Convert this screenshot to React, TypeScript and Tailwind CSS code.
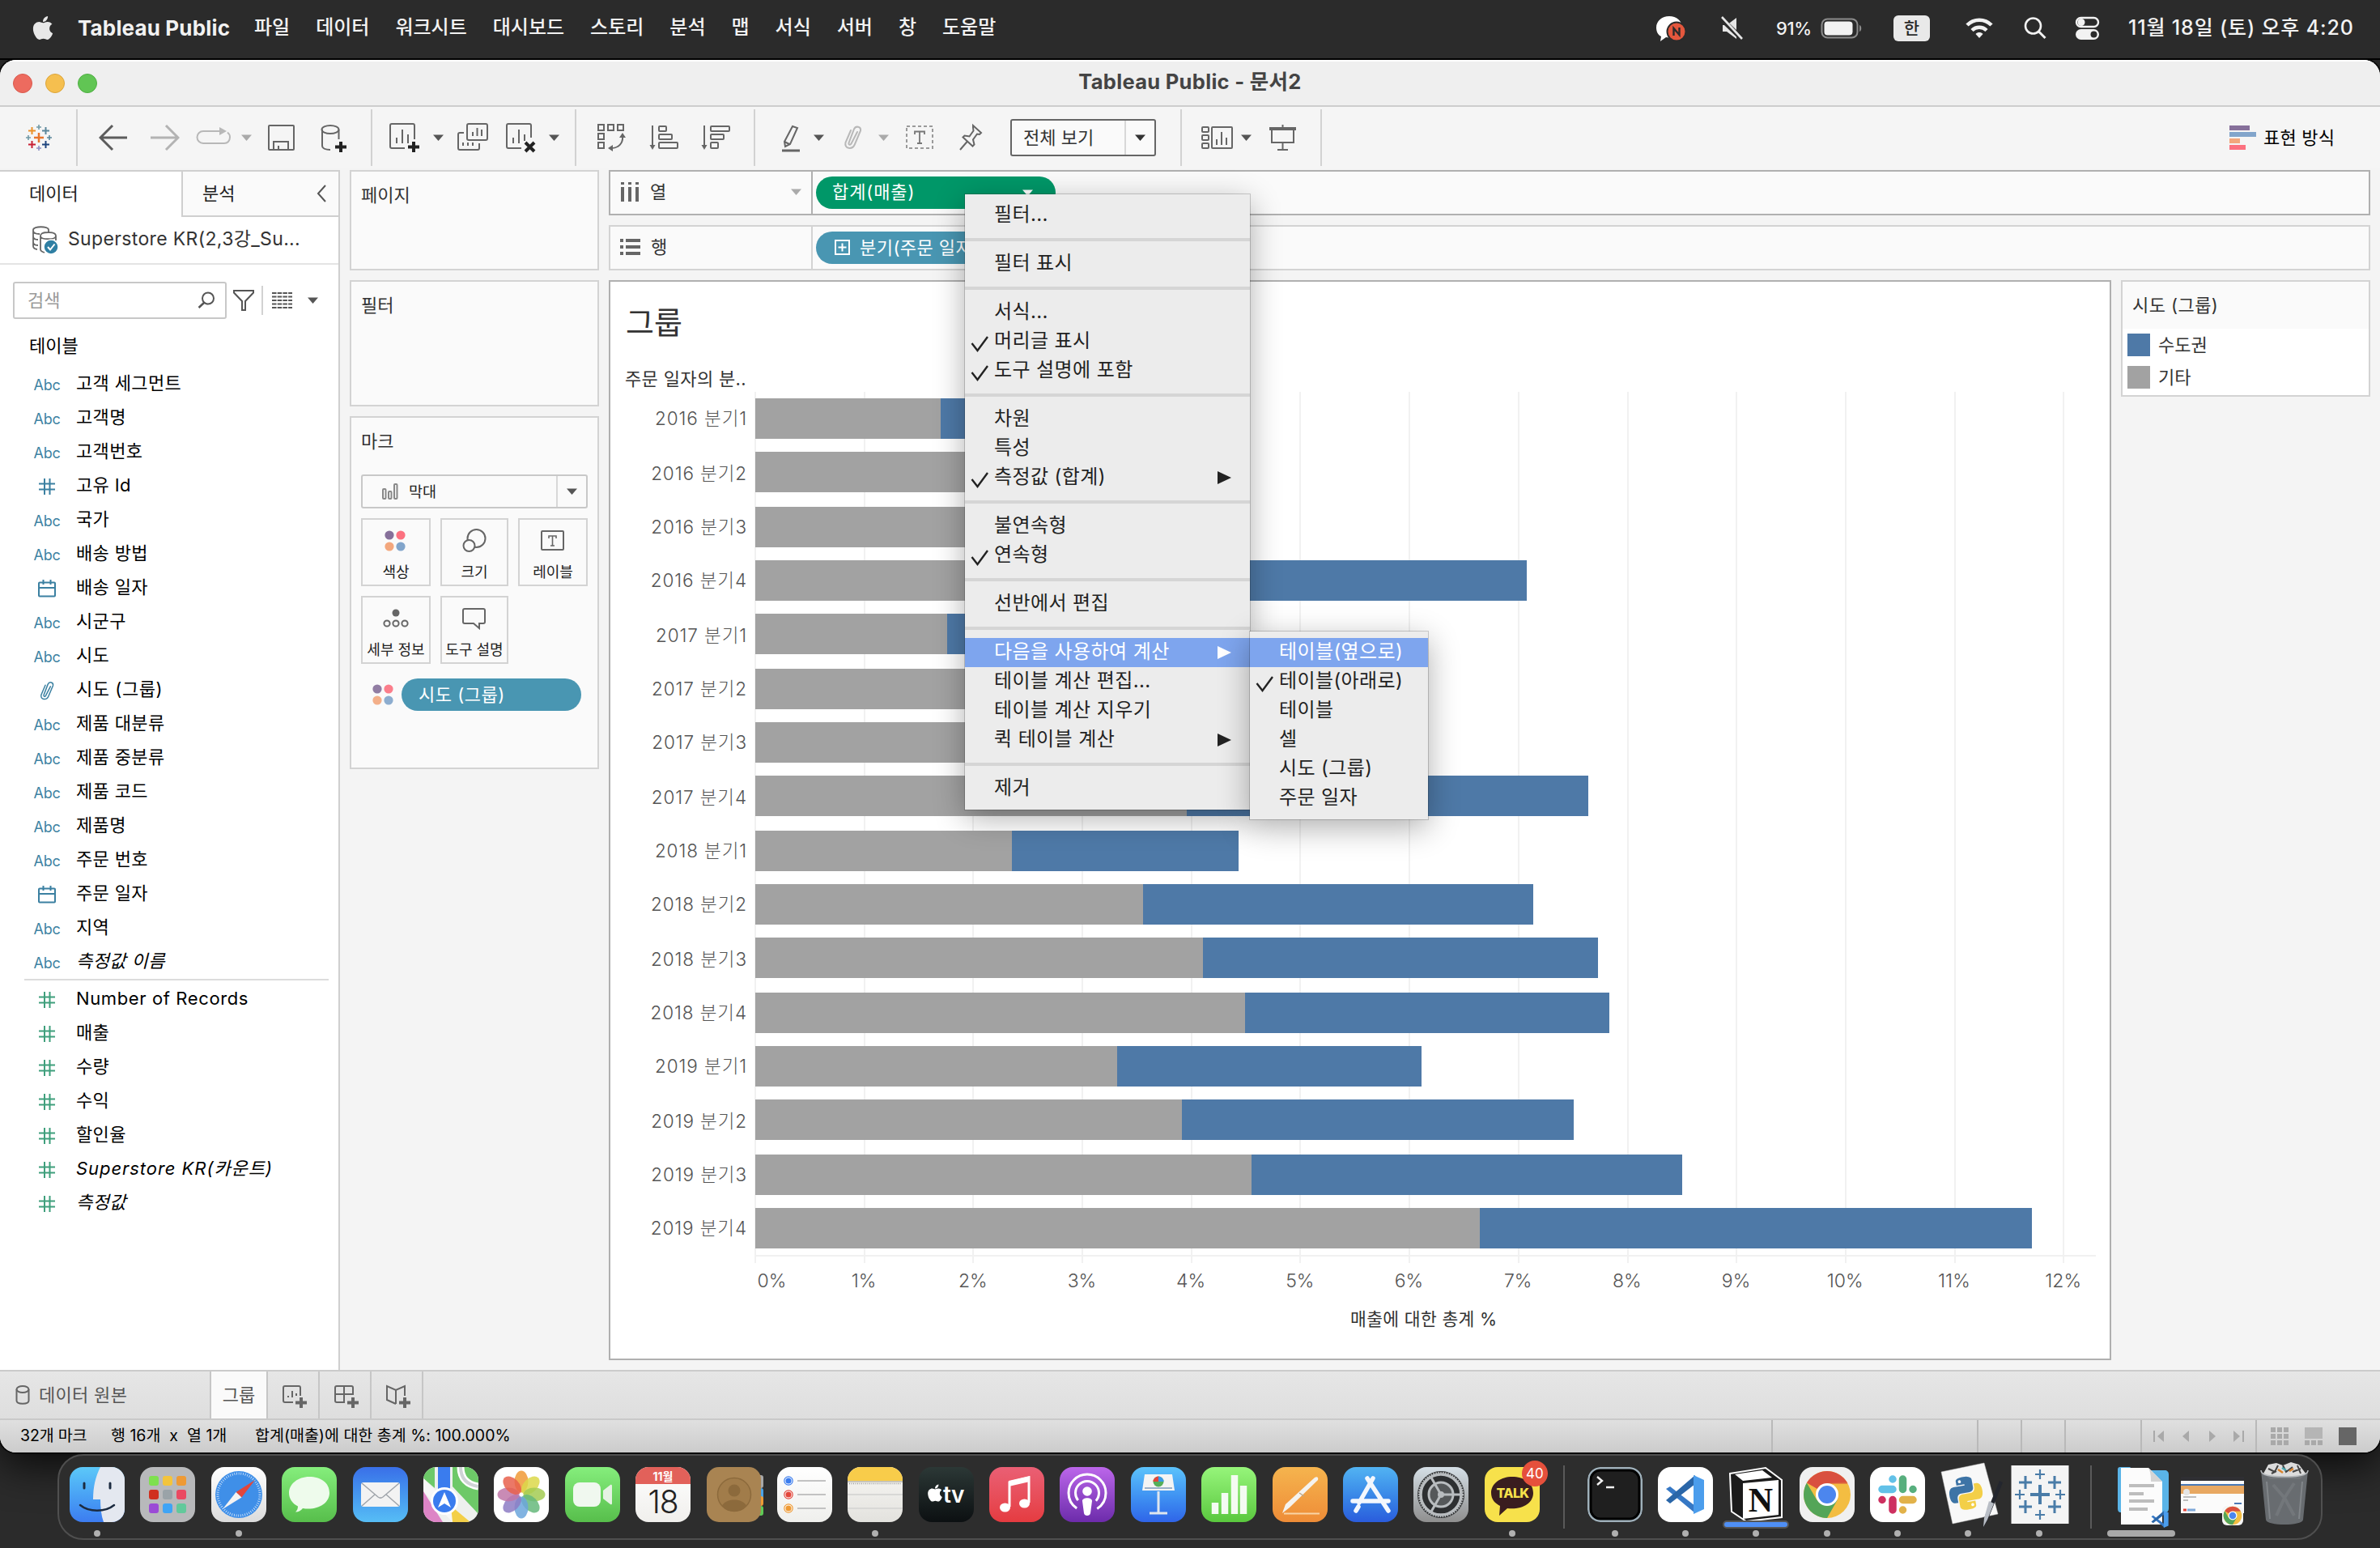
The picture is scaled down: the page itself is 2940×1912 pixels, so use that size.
import React from "react";
import { FaApple } from "react-icons/fa";

type IconProps = { w: number; h?: number; className?: string; children: React.ReactNode; color?: string; sw?: number };

function Ico({ w, h = 40, className = "", children, color = "#666", sw = 2 }: IconProps) {
  return (
    <svg width={w} height={h} viewBox={`0 0 ${w} ${h}`} className={`block shrink-0 ${className}`} fill="none" stroke={color} strokeWidth={sw}>
      {children}
    </svg>
  );
}

function Tri({ className = "", color = "#555" }: { className?: string; color?: string }) {
  return (
    <svg width="13" height="8" viewBox="0 0 13 8" className={`block shrink-0 ${className}`}>
      <path d="M0 0.5h13L6.5 8z" fill={color} />
    </svg>
  );
}

const VSep = ({ className = "" }: { className?: string }) => <div className={`h-[70px] w-[2px] shrink-0 bg-[#d2d2d2] ${className}`} />;

/* ------------------------------ macOS menu bar ------------------------------ */

const menus = ["파일", "데이터", "워크시트", "대시보드", "스토리", "분석", "맵", "서식", "서버", "창", "도움말"];

function MenuBar() {
  return (
    <div className="relative z-10 flex h-[74px] items-center border-b-2 border-black bg-[#2b2b2b] text-[24px] leading-[40px] font-medium text-[#f2f2f2]">
      <FaApple className="mt-[-4px] ml-[38px] h-[33px] w-[30px] text-[#e8e8e8]" />
      <div className="mt-[-3px] ml-[28px] w-[218px] text-[26px] font-bold tracking-[0.150px] whitespace-nowrap">Tableau Public</div>
      <div className="mt-[-5px] flex gap-[32px]">
        {menus.map((m) => (
          <span key={m} className="whitespace-nowrap">{m}</span>
        ))}
      </div>
      <div className="mt-[-2px] ml-auto flex items-center">
        <Ico w={38} h={34} color="none" className="mr-[41px]">
          <path d="M17 2C8 2 1 8 1 16c0 5 2 9 6 11l-1 6 7-5c10 2 20-4 20-12S26 2 17 2z" fill="#fff" />
          <circle cx="26" cy="21" r="11.5" fill="#e4573d" stroke="#2b2b2b" />
          <path d="M22.5 26v-9l7 8v-9" stroke="#2b2b2b" strokeWidth="2.4" fill="none" />
        </Ico>
        <Ico w={30} h={32} color="#e6e6e6" className="mr-[40px]">
          <path d="M4 12h5l12-9v26L9 20H4z" fill="#e6e6e6" stroke="none" />
          <path d="M1 3l27 26" stroke="#2b2b2b" strokeWidth="6" />
          <path d="M3 2l25 27" strokeWidth="2.6" />
        </Ico>
        <span className="mr-[9px] w-[46px] text-[22px] tracking-[-0.400px]">91%</span>
        <Ico w={52} h={26} color="#8c8c8c" className="mr-[38px]">
          <rect x="1.5" y="1.5" width="44" height="23" rx="7" strokeWidth="2" />
          <rect x="4.500" y="4.500" width="35" height="17" rx="4" fill="#f2f2f2" stroke="none" />
          <path d="M48 9c3 1 3 7 0 8z" fill="#8c8c8c" stroke="none" />
        </Ico>
        <div className="mr-[43px] flex h-[32px] w-[45px] items-center justify-center rounded-[6px] bg-[#e9e9e9] text-[21px] font-medium text-[#2b2b2b]">한</div>
        <Ico w={36} h={28} color="#f2f2f2" className="mr-[36px]">
          <path d="M3 10C11 1.500 25 1.500 33 10" strokeWidth="4.500" />
          <path d="M9 16.500C14 11.500 22 11.500 27 16.500" strokeWidth="4.500" />
          <path d="M13.500 21c2.600-2.600 6.400-2.600 9 0L18 26z" fill="#f2f2f2" stroke="none" />
        </Ico>
        <Ico w={30} h={30} color="#f2f2f2" className="mr-[34px]">
          <circle cx="12.500" cy="12" r="9.500" strokeWidth="2.600" />
          <path d="M19.500 19l8 8" strokeWidth="3" />
        </Ico>
        <Ico w={32} h={30} color="#f2f2f2" className="mr-[34px]">
          <rect x="2" y="2" width="27" height="11" rx="5.500" strokeWidth="2.400" />
          <circle cx="8" cy="7.500" r="3.500" fill="#f2f2f2" />
          <rect x="1" y="16" width="29" height="13" rx="6.500" fill="#f2f2f2" stroke="none" />
          <circle cx="23.500" cy="22.500" r="4" fill="#2b2b2b" stroke="none" />
        </Ico>
        <span className="mt-[-2px] mr-[33px] w-[278px] text-[25px] tracking-[0.850px] whitespace-nowrap">11월 18일 (토) 오후 4:20</span>
      </div>
    </div>
  );
}

/* --------------------------------- Toolbar --------------------------------- */

function Cross({ x, y, r, c, s = 2 }: { x: number; y: number; r: number; c: string; s?: number }) {
  return <path d={`M${x - r} ${y}h${2 * r}M${x} ${y - r}v${2 * r}`} stroke={c} strokeWidth={s} />;
}

function Clip({ color }: { color: string }) {
  return (
    <>
      <path d="M19 13l-7.500 14.500c-1 2-3.500 1.500-3-1L15 9.500c2-4.500 9-3.500 8 2L16 28c-3 7.500-13.500 6-11.500-2L11 11" stroke={color} strokeLinecap="round" />
    </>
  );
}

function Toolbar() {
  return (
    <div className="flex h-[76px] items-center bg-[#f5f5f5]">
      <Ico w={36} className="ml-[30px]" color="none">
        <Cross x={18} y={20} r={6} c="#e8762d" s={2.5} />
        <Cross x={9.500} y={11.500} r={4.500} c="#eb9129" />
        <Cross x={26.500} y={11.500} r={4.500} c="#5b879b" />
        <Cross x={9.500} y={28.500} r={4.500} c="#c72035" />
        <Cross x={26.500} y={28.500} r={4.500} c="#1f457e" />
        <Cross x={18} y={7} r={3} c="#7099a6" s={1.6} />
        <Cross x={18} y={33} r={3} c="#8d8fc2" s={1.6} />
        <Cross x={5} y={20} r={3} c="#7099a6" s={1.6} />
        <Cross x={31} y={20} r={3} c="#59879b" s={1.6} />
      </Ico>
      <VSep className="ml-[28px]" />
      <Ico w={36} className="ml-[26px]" sw={3} color="#5c5c5c">
        <path d="M2 20h33M17 5L2 20l15 15" />
      </Ico>
      <Ico w={36} className="ml-[28px]" sw={3} color="#b3b3b3">
        <path d="M0 20h33M19 5l15 15-15 15" />
      </Ico>
      <Ico w={44} className="ml-[20px]" color="#b8b8b8">
        <path d="M31 12H9a7.500 7.500 0 000 15h26c4 0 7-3 7-7.500 0-3-1-4.500-3-6" />
        <path d="M29 7v10l9-5z" fill="#b8b8b8" stroke="none" />
      </Ico>
      <Tri className="ml-[12px]" color="#aaa" />
      <Ico w={34} className="ml-[20px]">
        <rect x="1" y="5" width="31" height="30" rx="1" />
        <path d="M7 35v-10h18v10M13 35v-5" />
      </Ico>
      <Ico w={34} className="ml-[31px]">
        <ellipse cx="12" cy="10" rx="10.500" ry="5" />
        <path d="M2 10v20c0 3 4 5 10 5M22.500 10v12" />
        <path d="M25 25v13M18 31.500h14" stroke="#222" strokeWidth="4" />
      </Ico>
      <VSep className="ml-[28px]" />
      <Ico w={40} className="ml-[20px]">
        <path d="M20 33H4a2 2 0 01-2-2V5a2 2 0 012-2h26a2 2 0 012 2v17" />
        <path d="M10 27v-7M17 27V10M24 27V16" />
        <path d="M31 25v13M24 31.500h14" stroke="#222" strokeWidth="4" />
      </Ico>
      <Tri className="ml-[15px]" />
      <Ico w={40} className="ml-[16px]">
        <rect x="13" y="3" width="25" height="20" rx="2" />
        <path d="M20 18v-5M25.500 18V8M31 18v-8" />
        <path d="M9 14H4a2 2 0 00-2 2v17a2 2 0 002 2h22a2 2 0 002-2v-6M8 30v-4M14 30v-4M20 30v-4" />
      </Ico>
      <Ico w={40} className="ml-[20px]">
        <path d="M20 33H4a2 2 0 01-2-2V5a2 2 0 012-2h26a2 2 0 012 2v15" />
        <path d="M10 27v-7M17 27V10M24 24v-8" />
        <path d="M25 26l11 11M36 26L25 37" stroke="#222" strokeWidth="4" />
      </Ico>
      <Tri className="ml-[14px]" />
      <VSep className="ml-[19px]" />
      <Ico w={38} className="ml-[25px]">
        <rect x="2" y="4" width="7" height="7" />
        <rect x="14" y="4" width="7" height="7" />
        <rect x="26" y="4" width="7" height="7" />
        <rect x="2" y="15" width="7" height="7" />
        <rect x="2" y="26" width="7" height="7" />
        <path d="M18 33c9 0 15-6 14-15" />
        <path d="M32 14l-4 6h8zM14 33l6-4v8z" fill="#666" stroke="none" />
      </Ico>
      <Ico w={38} className="ml-[26px]">
        <path d="M5 5v27" />
        <path d="M5 35l-3.500-6h7z" fill="#666" stroke="none" />
        <rect x="13" y="6" width="9" height="6" rx="1" />
        <rect x="13" y="16" width="16" height="6" rx="1" />
        <rect x="13" y="26" width="23" height="7" rx="1" />
      </Ico>
      <Ico w={38} className="ml-[26px]">
        <path d="M5 5v27" />
        <path d="M5 35l-3.500-6h7z" fill="#666" stroke="none" />
        <rect x="13" y="6" width="23" height="6" rx="1" />
        <rect x="13" y="16" width="16" height="6" rx="1" />
        <rect x="13" y="26" width="9" height="7" rx="1" />
      </Ico>
      <VSep className="ml-[28px]" />
      <Ico w={26} className="ml-[32px]">
        <path d="M14 6l6 2-9 20-6 3-1-6z M4 25l6 3" />
        <path d="M1 36h22" strokeWidth="3" />
      </Ico>
      <Tri className="ml-[14px]" />
      <Ico w={28} className="ml-[22px]">
        <Clip color="#b8b8b8" />
      </Ico>
      <Tri className="ml-[17px]" color="#aaa" />
      <Ico w={36} className="ml-[20px]" color="#9a9a9a">
        <rect x="2" y="6" width="32" height="27" strokeDasharray="4 3" />
        <path d="M12 16v-3.500h12V16M18 12.500V27M15 27h6" strokeWidth="1.800" stroke="#777" />
      </Ico>
      <Ico w={32} className="ml-[30px]">
        <path d="M18 5l10 9-2 2-3-.5-5 7 1.500 6-2 2-12-11 2-2 6 1 5-7-.5-4zM11.500 24L2 35" />
      </Ico>
      <div className="ml-[32px] flex h-[46px] w-[180px] items-center rounded-[3px] border-2 border-[#666] bg-[#fafafa]">
        <span className="ml-[14px] w-[125px] text-[22px] font-normal text-[#333]">전체 보기</span>
        <div className="h-full w-[2px] bg-[#d8d8d8]" />
        <Tri className="ml-[11px]" color="#333" />
      </div>
      <VSep className="ml-[30px]" />
      <Ico w={40} className="ml-[24px]">
        <rect x="1" y="7" width="8" height="6" rx="1" />
        <rect x="1" y="17" width="8" height="6" rx="1" />
        <rect x="1" y="27" width="8" height="6" rx="1" />
        <rect x="13" y="7" width="25" height="26" rx="1" />
        <path d="M19 29v-7M25 29V13M31 29v-9" />
      </Ico>
      <Tri className="ml-[9px]" />
      <Ico w={36} className="ml-[21px]">
        <path d="M1 9h33" strokeWidth="4" />
        <path d="M4 10v16h27V10M17.500 4v4M17.500 26v8M11 35h13" />
      </Ico>
      <VSep className="ml-[28px]" />
      <Ico w={36} className="ml-auto" color="none">
        <path d="M2 5h25v6H2z" fill="#86709a" />
        <path d="M2 13h33v6H2z" fill="#82a5cb" />
        <path d="M2 21h13v6H2z" fill="#f3a77d" />
        <path d="M2 29h20v6H2z" fill="#fc7180" />
      </Ico>
      <span className="mr-[54px] ml-[8px] w-[90px] text-[22px] tracking-[0.2px] whitespace-nowrap text-black">표현 방식</span>
    </div>
  );
}

/* -------------------------------- Data pane -------------------------------- */

type Kind = "abc" | "num" | "date" | "clip";
type FieldDef = { kind: Kind; name: string; className?: string };
const dims: FieldDef[] = [
  { kind: "abc", name: "고객 세그먼트" },
  { kind: "abc", name: "고객명" },
  { kind: "abc", name: "고객번호" },
  { kind: "num", name: "고유 Id" },
  { kind: "abc", name: "국가" },
  { kind: "abc", name: "배송 방법" },
  { kind: "date", name: "배송 일자" },
  { kind: "abc", name: "시군구" },
  { kind: "abc", name: "시도" },
  { kind: "clip", name: "시도 (그룹)", className: "tracking-[0.550px]" },
  { kind: "abc", name: "제품 대분류" },
  { kind: "abc", name: "제품 중분류" },
  { kind: "abc", name: "제품 코드" },
  { kind: "abc", name: "제품명" },
  { kind: "abc", name: "주문 번호" },
  { kind: "date", name: "주문 일자" },
  { kind: "abc", name: "지역" },
  { kind: "abc", name: "측정값 이름", className: "italic tracking-[0.400px]" },
];
const measures: FieldDef[] = [
  { kind: "num", name: "Number of Records", className: "tracking-[0.620px]" },
  { kind: "num", name: "매출" },
  { kind: "num", name: "수량" },
  { kind: "num", name: "수익" },
  { kind: "num", name: "할인율" },
  { kind: "num", name: "Superstore KR(카운트)", className: "italic tracking-[0.950px]" },
  { kind: "num", name: "측정값", className: "italic tracking-[0.400px]" },
];

function Field({ kind, name, className = "tracking-[0.350px]", color }: FieldDef & { color: string }) {
  return (
    <div className="flex h-[42px] items-center">
      <div className="ml-[40px] flex w-[36px] translate-y-[2px] justify-center">
        {kind === "abc" && <span className="text-[18px] tracking-[-0.300px] text-[#4083a3]">Abc</span>}
        {kind === "num" && (
          <Ico w={22} h={22} color={color}>
            <path d="M8 1v20M14.500 1v20M1 7.500h20M1 14.500h20" />
          </Ico>
        )}
        {kind === "date" && (
          <Ico w={22} h={22} color={color}>
            <rect x="1" y="3.500" width="20" height="17" rx="1" />
            <path d="M1 10h20M6.500 0v6M15.500 0v6" />
          </Ico>
        )}
        {kind === "clip" && (
          <svg width="22" height="26" viewBox="1 3 25 33" fill="none" strokeWidth="1.900">
            <Clip color={color} />
          </svg>
        )}
      </div>
      <span className={`ml-[18px] text-[22px] whitespace-nowrap text-black ${className}`}>{name}</span>
    </div>
  );
}

function DataPane() {
  return (
    <div className="flex w-[420px] shrink-0 flex-col border-t-2 border-r-2 border-[#cfcfcf] bg-white">
      <div className="flex h-[56px] text-[22px] text-[#222]">
        <div className="flex w-[224px] items-center pb-[2px] pl-[36px]">데이터</div>
        <div className="flex grow items-center border-b-2 border-l-2 border-[#cfcfcf] bg-[#fafafa] pl-[24px]">
          분석
          <Ico w={14} h={22} className="mr-[14px] ml-auto" color="#555">
            <path d="M12 1L3 11l9 10" />
          </Ico>
        </div>
      </div>
      <div className="flex h-[59px] items-center border-b-2 border-[#e4e4e4]">
        <Ico w={34} h={36} className="ml-[39px]" color="#666">
          <path d="M21 8.500V5c0-5-19-5-19 0v20c0 2 2 3.500 5 4M2 6c0 3 4 4 8 4M21 8c-8 0-10 2-10 4.500V29c0 2 2 3 5 4M11 12.500c0 5 19 5 19 0S21 8 21 8M30 12v6M2 13c0 3 3 4 6 4M2 20c0 3 3 4 6 4" strokeWidth="1.800" />
          <circle cx="24" cy="26" r="9" fill="#2f7fa3" stroke="#fff" strokeWidth="1.500" />
          <path d="M20 26l3 3.500 5.500-7" stroke="#fff" />
        </Ico>
        <span className="mt-[-2px] ml-[11px] text-[23px] tracking-[0.350px] whitespace-nowrap text-[#333]">Superstore KR(2,3강_Su...</span>
      </div>
      <div className="mt-[21px] flex h-[46px] items-center">
        <div className="ml-[16px] flex h-[46px] w-[264px] items-center rounded-[3px] border-2 border-[#c8c8c8] bg-white">
          <span className="ml-[16px] text-[22px] text-[#9a9a9a]">검색</span>
          <Ico w={22} h={22} className="mr-[12px] ml-auto" color="#555">
            <circle cx="13" cy="8.500" r="7" />
            <path d="M8.500 13.500L1.500 20" strokeWidth="2.500" />
          </Ico>
        </div>
        <Ico w={28} h={28} className="ml-[7px]" color="#555">
          <path d="M2 2h24v2.500L16 15v11h-4V15L2 4.500z" />
        </Ico>
        <div className="ml-[8px] h-[36px] w-[2px] bg-[#d2d2d2]" />
        <Ico w={26} h={22} className="ml-[11px]" color="#555">
          <path d="M0 2h25M0 6.500h25M0 11h25M0 15.500h25M0 20h25" strokeDasharray="5.500 1.200" />
        </Ico>
        <Tri className="ml-[18px]" />
      </div>
      <div className="mt-[10px] mb-[2px] flex h-[46px] items-center pl-[36px] text-[22px] text-black">테이블</div>
      {dims.map((f) => (
        <Field key={f.name} {...f} color="#3b80a1" />
      ))}
      <div className="mt-[1px] mr-[12px] mb-[1px] ml-[30px] h-[2px] shrink-0 bg-[#dcdcdc]" />
      {measures.map((f) => (
        <Field key={f.name} {...f} color="#3f9f7c" />
      ))}
    </div>
  );
}

/* ---------------------------------- Cards ---------------------------------- */

function ColorDots({ className = "" }: { className?: string }) {
  return (
    <Ico w={28} h={28} color="none" className={className}>
      <circle cx="7" cy="7" r="5.600" fill="#86709a" />
      <circle cx="21" cy="7" r="5.600" fill="#fc7180" />
      <circle cx="7" cy="21" r="5.600" fill="#f3a77d" />
      <circle cx="21" cy="21" r="5.600" fill="#82a5cb" />
    </Ico>
  );
}

function MarkButton({ label, className, children }: { label: string; className: string; children: React.ReactNode }) {
  return (
    <div className={`flex h-[84px] flex-col items-center border-2 border-[#d3d3d3] bg-[#fafafa] ${className}`}>
      <div className="flex h-[52px] items-center justify-center">{children}</div>
      <div className="text-[18px] leading-[26px] whitespace-nowrap text-[#222]">{label}</div>
    </div>
  );
}

function CardColumn() {
  return (
    <div className="ml-[12px] flex w-[308px] shrink-0 flex-col gap-[12px] text-[22px] leading-[32px] text-[#333]">
      <div className="h-[124px] border-2 border-[#d3d3d3] bg-[#fafafa] pt-[13px] pl-[12px]">페이지</div>
      <div className="h-[156px] border-2 border-[#d3d3d3] bg-[#fafafa] pt-[13px] pl-[12px]">필터</div>
      <div className="h-[436px] border-2 border-[#d3d3d3] bg-[#fafafa] px-[12px] pt-[13px]">
        마크
        <div className="mt-[25px] flex h-[42px] items-center rounded-[3px] border-2 border-[#c8c8c8]">
          <Ico w={20} h={22} className="ml-[24px]" color="#888">
            <rect x="1" y="8" width="3.500" height="12" rx="1" />
            <rect x="8" y="11" width="3.500" height="9" rx="1" />
            <rect x="15" y="2" width="3.500" height="18" rx="1" />
          </Ico>
          <span className="ml-[13px] text-[18.500px] text-[#222]">막대</span>
          <div className="ml-auto h-full w-[2px] bg-[#d8d8d8]" />
          <Tri className="mx-[11px]" />
        </div>
        <div className="mt-[12px] flex gap-[12px]">
          <MarkButton label="색상" className="w-[86px]">
            <ColorDots className="ml-[-2px]" />
          </MarkButton>
          <MarkButton label="크기" className="w-[84px]">
            <Ico w={32} h={32}>
              <circle cx="18.500" cy="13" r="11" />
              <circle cx="9.500" cy="22" r="7" fill="#fafafa" />
            </Ico>
          </MarkButton>
          <MarkButton label="레이블" className="w-[86px]">
            <Ico w={30} h={26}>
              <rect x="1" y="1" width="27" height="23" rx="1" />
              <path d="M10 10V7h9v3M14.500 7v12M12 19h5" strokeWidth="1.600" />
            </Ico>
          </MarkButton>
        </div>
        <div className="mt-[12px] flex gap-[12px]">
          <MarkButton label="세부 정보" className="w-[86px]">
            <Ico w={32} h={24}>
              <circle cx="16" cy="5" r="4.500" fill="#666" stroke="none" />
              <circle cx="5" cy="18" r="3.600" />
              <circle cx="16" cy="18" r="3.600" />
              <circle cx="27" cy="18" r="3.600" />
            </Ico>
          </MarkButton>
          <MarkButton label="도구 설명" className="w-[84px]">
            <Ico w={30} h={28}>
              <path d="M3 2h23a2 2 0 012 2v14a2 2 0 01-2 2h-5v6l-7-6H3a2 2 0 01-2-2V4a2 2 0 012-2z" />
            </Ico>
          </MarkButton>
        </div>
        <div className="mt-[18px] flex items-center">
          <ColorDots className="ml-[13px] opacity-90" />
          <div className="ml-[9px] h-[40px] w-[222px] rounded-full bg-[#4996b2] pl-[21px] text-[22px] leading-[40px] tracking-[0.500px] text-white">시도 (그룹)</div>
        </div>
      </div>
    </div>
  );
}

/* ---------------------------------- Chart ---------------------------------- */

const ORIGIN = 933;
// [label, end of the grey segment, end of the blue segment] in canvas pixels
const rows: [string, number, number][] = [
  ["2016 분기1", 1162, 1330],
  ["2016 분기2", 1240, 1450],
  ["2016 분기3", 1300, 1500],
  ["2016 분기4", 1430, 1886],
  ["2017 분기1", 1170, 1380],
  ["2017 분기2", 1280, 1500],
  ["2017 분기3", 1300, 1520],
  ["2017 분기4", 1466, 1962],
  ["2018 분기1", 1250, 1530],
  ["2018 분기2", 1412, 1894],
  ["2018 분기3", 1486, 1974],
  ["2018 분기4", 1538, 1988],
  ["2019 분기1", 1380, 1756],
  ["2019 분기2", 1460, 1944],
  ["2019 분기3", 1546, 2078],
  ["2019 분기4", 1828, 2510],
];
const ticks = [0, 1, 2, 3, 4, 5, 6, 7, 8, 9, 10, 11, 12];

function Chart() {
  return (
    <div className="h-[1334px] w-[1856px] border-2 border-[#b0b0b0] bg-white">
      <div className="mt-[27px] ml-[19px] h-[46px] text-[38px] leading-[46px] text-[#333]">그룹</div>
      <div className="mt-[31px] ml-[18px] h-[32px] text-[22px] leading-[32px] tracking-[0.350px] text-[#333]">주문 일자의 분..</div>
      <div className="relative h-[1066px]">
        <div className="absolute inset-y-0 left-[178px] flex">
          {ticks.map((t) => (
            <div key={t} className="w-[134.700px] border-l-2 border-[#f1f1f1] last:w-[40px]" />
          ))}
        </div>
        <div className="relative flex flex-col">
          {rows.map(([label, grey, blue], i) => (
            <div key={label} className={`flex items-center ${i % 3 === 1 ? "h-[68px] pb-[2px]" : "h-[66px]"}`}>
              <div className={`w-[169px] text-right text-[22.500px] font-light tracking-[0.900px] whitespace-nowrap text-[#555] ${i % 3 === 1 ? "translate-y-[2px]" : ""}`}>{label}</div>
              <div className="ml-[10px] h-[50px] bg-[#a2a2a2]" style={{ width: grey - ORIGIN }} />
              <div className="h-[50px] bg-[#4e79a7]" style={{ width: blue - grey }} />
            </div>
          ))}
        </div>
      </div>
      <div className="ml-[178px] h-[2px] w-[1657px] bg-[#f1f1f1]" />
      <div className="ml-[178px] flex h-[8px]">
        {ticks.map((t) => (
          <div key={t} className="w-[134.700px] border-l-2 border-[#f1f1f1] last:w-[40px]" />
        ))}
      </div>
      <div className="mt-[6px] ml-[111px] flex h-[32px] text-[23px] leading-[32px] font-light text-[#555]">
        {ticks.map((t) => (
          <div key={t} className={`w-[134.700px] shrink-0 text-center ${t === 0 ? "pl-[42px]" : ""}`}>
            {t}%
          </div>
        ))}
      </div>
      <div className="mt-[15px] ml-[914px] text-[21.500px] leading-[32px] tracking-[0.350px] whitespace-nowrap text-[#333]">매출에 대한 총계 %</div>
    </div>
  );
}

function Workspace() {
  return (
    <div className="ml-[12px] flex flex-col gap-[12px] text-[22px]">
      <div className="flex h-[56px] w-[2176px] items-center border-2 border-[#b0b0b0] bg-[#fafafa]">
        <Ico w={24} h={26} className="mt-[-3px] ml-[12px]" color="#666" sw={4}>
          <path d="M3 1v3M3 7v18M12 1v3M12 7v18M21 1v3M21 7v18" />
        </Ico>
        <span className="mt-[-2px] ml-[13px] w-[174px] text-[#333]">열</span>
        <Tri className="mt-[-2px]" color="#aaa" />
        <div className="ml-[12px] h-full w-[2px] bg-[#b0b0b0]" />
        <div className="ml-[4px] flex h-[40px] w-[296px] items-center rounded-full bg-[#009768] pb-[1px] pl-[20px] tracking-[0.900px] text-white">
          합계(매출)
          <Tri className="mr-[28px] ml-auto" color="#fff" />
        </div>
      </div>
      <div className="flex h-[56px] w-[2176px] items-center border-2 border-[#d3d3d3] bg-[#fafafa]">
        <Ico w={26} h={22} className="mt-[-2px] ml-[12px]" color="#666" sw={4}>
          <path d="M0 3h4M7 3h18M0 11h4M7 11h18M0 19h4M7 19h18" />
        </Ico>
        <span className="mt-[-1px] ml-[12px] w-[198px] text-[#333]">행</span>
        <div className="h-full w-[2px] bg-[#d3d3d3]" />
        <div className="ml-[4px] flex h-[40px] w-[296px] items-center rounded-full bg-[#4996b2] pl-[23px] tracking-[0.450px] text-white">
          <Ico w={20} h={20} color="#fff" className="mr-[11px]">
            <rect x="1" y="1" width="17" height="17" />
            <path d="M9.500 4.500v10M4.500 9.500h10" />
          </Ico>
          분기(주문 일자)
        </div>
      </div>
      <div className="flex gap-[12px]">
        <Chart />
        <div className="h-[144px] w-[308px] border-2 border-[#d3d3d3] bg-white text-[#333]">
          <div className="h-[58px] bg-[#fafafa] pl-[12px] text-[22px] leading-[58px] tracking-[0.450px]">시도 (그룹)</div>
          <div className="flex h-[40px] items-center pl-[6px]">
            <div className="h-[28px] w-[28px] bg-[#4e79a7]" />
            <span className="ml-[10px]">수도권</span>
          </div>
          <div className="flex h-[40px] items-center pl-[6px]">
            <div className="h-[28px] w-[28px] bg-[#a2a2a2]" />
            <span className="ml-[10px]">기타</span>
          </div>
        </div>
      </div>
    </div>
  );
}

/* ------------------------------- Context menus ------------------------------ */

type Item = { t: string; check?: boolean; arrow?: boolean; on?: boolean } | "-";
const mainMenu: Item[] = [
  { t: "필터..." },
  "-",
  { t: "필터 표시" },
  "-",
  { t: "서식..." },
  { t: "머리글 표시", check: true },
  { t: "도구 설명에 포함", check: true },
  "-",
  { t: "차원" },
  { t: "특성" },
  { t: "측정값 (합계)", check: true, arrow: true },
  "-",
  { t: "불연속형" },
  { t: "연속형", check: true },
  "-",
  { t: "선반에서 편집" },
  "-",
  { t: "다음을 사용하여 계산", arrow: true, on: true },
  { t: "테이블 계산 편집..." },
  { t: "테이블 계산 지우기" },
  { t: "퀵 테이블 계산", arrow: true },
  "-",
  { t: "제거" },
];
const subMenu: Item[] = [
  { t: "테이블(옆으로)", on: true },
  { t: "테이블(아래로)", check: true },
  { t: "테이블" },
  { t: "셀" },
  { t: "시도 (그룹)" },
  { t: "주문 일자" },
];

function ContextMenu({ items, className }: { items: Item[]; className: string }) {
  return (
    <div className={`absolute z-20 bg-[#ececec] py-[8px] shadow-[0_0_0_1px_rgba(0,0,0,0.18),0_10px_36px_rgba(0,0,0,0.32)] ${className}`}>
      {items.map((it, i) =>
        it === "-" ? (
          <div key={i} className="flex h-[24px] items-center">
            <div className="h-[4px] w-full bg-[#d5d5d5]" />
          </div>
        ) : (
          <div key={i} className={`flex h-[36px] items-center ${it.on ? "bg-[#7ea5ee] text-white" : "text-[#222]"}`}>
            <div className="w-[36px] pl-[7px]">
              {it.check && (
                <Ico w={23} h={24} color="#222" className="translate-y-[2px]">
                  <path d="M1.500 12l7 9L21 4" strokeWidth="2.400" />
                </Ico>
              )}
            </div>
            <span className="mt-[-2px] text-[24px] tracking-[0.400px] whitespace-nowrap">{it.t}</span>
            {it.arrow && (
              <svg width="17" height="18" viewBox="0 0 17 18" className="mr-[23px] ml-auto">
                <path d="M0 1l17 8-17 8z" fill="currentColor" />
              </svg>
            )}
          </div>
        ),
      )}
    </div>
  );
}

/* ------------------------------ Window footers ------------------------------ */

function SheetTabs() {
  const cell = "flex h-full w-[64px] items-center justify-center border-r-2 border-[#c6c6c6]";
  return (
    <div className="flex h-[60px] items-center border-t-2 border-[#cbcbcb] bg-linear-to-b from-[#e6e6e6] to-[#dedede] text-[22px] text-[#555]">
      <Ico w={18} h={24} className="ml-[19px]" color="#666">
        <ellipse cx="9" cy="5" rx="7.500" ry="4" />
        <path d="M1.500 5v14c0 5 15 5 15 0V5" />
      </Ico>
      <span className="ml-[11px] w-[211px] tracking-[0.300px]">데이터 원본</span>
      <div className="flex h-full w-[72px] items-center justify-center border-x-2 border-[#c6c6c6] bg-[#fafafa]">그룹</div>
      <div className={cell}>
        <Ico w={32} h={32} className="mt-[5px] ml-[4px]">
          <path d="M14 22H4a2 2 0 01-2-2V4a2 2 0 012-2h17a2 2 0 012 2v10M8 16v-2M13 16V8M18 14v-3" />
          <path d="M24 16v13M17 22.500h14" strokeWidth="4" />
        </Ico>
      </div>
      <div className={cell}>
        <Ico w={32} h={32} className="mt-[5px] ml-[3px]">
          <path d="M14 22H4a2 2 0 01-2-2V4a2 2 0 012-2h18a2 2 0 012 2v9M2 12h22M13 2v20" />
          <path d="M24 16v13M17 22.500h14" strokeWidth="4" />
        </Ico>
      </div>
      <div className={cell}>
        <Ico w={32} h={32} className="mt-[5px] ml-[3px]">
          <path d="M13 24L2 19V2l11 5 11-5v12M13 7v17" />
          <path d="M24 16v13M17 22.500h14" strokeWidth="4" />
        </Ico>
      </div>
    </div>
  );
}

function StatusBar() {
  const sep = "h-full w-[2px] bg-[#b9b9b9]";
  return (
    <div className="flex h-[42px] items-center border-t-2 border-[#c9c9c9] bg-linear-to-b from-[#e0e0e0] to-[#cccccc] text-[19.500px] text-black">
      <span className="ml-[25px] w-[112px] tracking-[-0.150px]">32개 마크</span>
      <span className="w-[178px] whitespace-pre">행 16개&nbsp; x&nbsp; 열 1개</span>
      <span className="whitespace-nowrap">합계(매출)에 대한 총계 %: 100.000%</span>
      <div className="ml-auto flex h-full items-center">
        <div className={`${sep} mr-[252px]`} />
        <div className={`${sep} mr-[52px]`} />
        <div className={`${sep} mr-[52px]`} />
        <div className={`${sep} mr-[92px]`} />
        <div className={`${sep} mr-[14px]`} />
        <div className="flex w-[112px] justify-between">
          <Ico w={14} h={16} color="#a9a9a9">
            <path d="M1 1v14" />
            <path d="M13 1v14L5 8z" fill="#a9a9a9" stroke="none" />
          </Ico>
          <Ico w={14} h={16} color="none">
            <path d="M11 1v14L3 8z" fill="#a9a9a9" />
          </Ico>
          <Ico w={14} h={16} color="none">
            <path d="M4 1v14l8-7z" fill="#a9a9a9" />
          </Ico>
          <Ico w={14} h={16} color="#a9a9a9">
            <path d="M13 1v14" />
            <path d="M1 1v14l8-7z" fill="#a9a9a9" stroke="none" />
          </Ico>
        </div>
        <div className={`${sep} mr-[16px] ml-[14px]`} />
        <Ico w={24} h={24} color="#a9a9a9" sw={6}>
          <path d="M1 4h22M1 12h22M1 20h22" strokeDasharray="6 2" />
        </Ico>
        <Ico w={24} h={24} color="#a9a9a9" sw={6} className="ml-[18px]">
          <path d="M1 1h22v14H1z" fill="#b5b5b5" stroke="none" />
          <path d="M1 20h22" strokeDasharray="6 2" />
        </Ico>
        <div className="mr-[29px] ml-[19px] h-[22px] w-[22px] bg-[#666]" />
      </div>
    </div>
  );
}

/* ----------------------------------- Dock ----------------------------------- */

function Tile({ bg = "", dot, children, bare }: { bg?: string; dot?: boolean; children?: React.ReactNode; bare?: boolean }) {
  return (
    <div className="relative flex h-[68px] w-[68px] shrink-0 justify-center">
      <div className={`h-[68px] w-[68px] ${bare ? "" : "overflow-hidden rounded-[16px]"} ${bg}`}>
        <svg width="68" height="68" viewBox="0 0 68 68" className="block overflow-visible">
          {children}
        </svg>
      </div>
      {dot && <div className="absolute top-[78px] h-[8px] w-[8px] rounded-full bg-[#b0b0b0]" />}
    </div>
  );
}

function Chrome() {
  return (
    <>
      <circle cx="34" cy="34" r="29" fill="#f3bd42" />
      <path d="M34 34L8.900 19.500A29 29 0 0159.100 19.500L34 20z" fill="#d9503f" />
      <path d="M8.900 19.500A29 29 0 0034 63L46.500 41 34 34 21.500 41z" fill="#54a558" />
      <path d="M34 20h25.100" stroke="#d9503f" strokeWidth="1" />
      <circle cx="34" cy="34" r="14" fill="#fff" />
      <circle cx="34" cy="34" r="11" fill="#4c86ee" />
    </>
  );
}

function VsCode() {
  return (
    <>
      <path d="M10 27l5-3 31 24v9z" fill="#3678c5" />
      <path d="M10 41l5 4 31-24V10z" fill="#2a66a8" />
      <path d="M44 10l13 6v36l-13 6z" fill="#4b9dec" />
    </>
  );
}

const petals: [number, string][] = [
  [0, "#f09a37"],
  [45, "#dcd84a"],
  [90, "#a3cb52"],
  [135, "#66b97b"],
  [180, "#6ba6dc"],
  [225, "#8d7cc4"],
  [270, "#c077a8"],
  [315, "#e8604c"],
];

const launch = ["#7ee04f", "#f3c43c", "#ee9a35", "#d0301f", "#9aa3a8", "#ea4a62", "#9b4bd6", "#3fa4f5", "#62c99b"];

function Dock() {
  return (
    <div className="mx-[71px] mt-[2px] flex h-[106px] items-start rounded-[32px] border-2 border-[#4f4f4f] bg-[#2d2d2d] pt-[14px] pl-[13px]">
      <div className="flex gap-[19.400px]">
        <Tile bg="bg-linear-to-b from-[#5cc8f8] to-[#3d7cf0]" dot>
          <path d="M38 0c-6 12-9 24-9 40h9c0 10 1 20 4 28h26V0z" fill="#e4e8f0" />
          <path d="M18 20v6M50 20v6" stroke="#1c2b40" strokeWidth="3" strokeLinecap="round" />
          <path d="M13 47c11 9 31 9 42 0" stroke="#1c2b40" strokeWidth="2.500" fill="none" strokeLinecap="round" />
        </Tile>
        <Tile bg="bg-[#b8b9bb]">
          {launch.map((c, i) => (
            <rect key={c} x={11 + (i % 3) * 17} y={11 + Math.floor(i / 3) * 17} width="12" height="12" rx="3" fill={c} />
          ))}
        </Tile>
        <Tile bg="bg-linear-to-b from-white to-[#dcdcdc]" dot>
          <circle cx="34" cy="34" r="29" fill="#3f8fe8" />
          <circle cx="34" cy="34" r="26" fill="none" stroke="#d4e6fa" strokeWidth="3" strokeDasharray="0.800 1.900" />
          <path d="M54 16L37.500 37.500 30.500 31z" fill="#e2463b" />
          <path d="M14 52l16.500-21 7 6.500z" fill="#f3f3f3" />
        </Tile>
        <Tile bg="bg-linear-to-b from-[#85ee7c] to-[#57be4b]">
          <path d="M34 12c-14 0-25 9-25 20 0 7 4 13 11 16.500 0 3-1 5-3 7 4 0 7-2 9-4.500 18 3 33-6 33-19S48 12 34 12z" fill="#eefbec" />
        </Tile>
        <Tile bg="bg-linear-to-b from-[#3a6fe8] to-[#57bdf5]">
          <rect x="10" y="19" width="48" height="30" rx="3" fill="#f3f3f3" />
          <path d="M11 20l20 17c2 1.500 4 1.500 6 0l20-17M11 48l16-14M57 48L41 34" stroke="#9fa4aa" strokeWidth="1.500" fill="none" />
        </Tile>
        <Tile bg="bg-[#eef0ee]">
          <path d="M36 0h32v58L36 24z" fill="#6dc968" />
          <path d="M0 0h14v26L0 14z" fill="#6dc968" />
          <path d="M0 14l34 34 20 20h-18L0 30z" fill="#f7f7f7" />
          <path d="M0 30l24 38H0z" fill="#dd84c6" />
          <path d="M34 48l24 20H36z" fill="#f3cf48" />
          <path d="M18 0h15v40H18z" fill="#3a7cee" />
          <path d="M46 0c0 14 8 22 22 24" stroke="#fff" strokeWidth="9" fill="none" />
          <path d="M46 0c0 14 8 22 22 24" stroke="#cfd3d6" strokeWidth="4" fill="none" />
          <circle cx="26" cy="42" r="17" fill="#fff" />
          <circle cx="26" cy="42" r="14" fill="#3a7cee" />
          <path d="M26 31l8 19-8-5-8 5z" fill="#fff" />
        </Tile>
        <Tile bg="bg-white">
          {petals.map(([a, c]) => (
            <ellipse key={a} cx="34" cy="18" rx="8.500" ry="13.500" fill={c} opacity="0.850" transform={`rotate(${a} 34 34)`} />
          ))}
        </Tile>
        <Tile bg="bg-linear-to-b from-[#85ee7c] to-[#57be4b]">
          <rect x="10" y="19" width="34" height="30" rx="8" fill="#f0f8ef" />
          <path d="M47 29l9-7c1-.8 2 0 2 1v22c0 1-1 1.800-2 1l-9-7z" fill="#e5f2e3" />
        </Tile>
        <Tile bg="bg-linear-to-b from-white to-[#f0efec]">
          <path d="M0 0h68v21H0z" fill="#e2615a" />
          <text x="34" y="17" textAnchor="middle" fontSize="14" fontWeight="700" fill="#fff">11월</text>
          <text x="34" y="57" textAnchor="middle" fontSize="39" fontWeight="300" fill="#222" letterSpacing="-1">18</text>
        </Tile>
        <Tile bare>
          <rect x="60" y="10" width="10" height="16" rx="3" fill="#a8a8a8" />
          <rect x="60" y="26" width="10" height="16" rx="3" fill="#4aa3e8" />
          <rect x="60" y="36" width="10" height="12" rx="3" fill="#ee9a35" />
          <rect x="60" y="48" width="10" height="12" rx="3" fill="#5fca56" />
          <rect width="67" height="68" rx="15" fill="#a98452" />
          <circle cx="34" cy="34" r="20.500" fill="#a17c4a" stroke="#8c6a3c" strokeWidth="1.500" />
          <circle cx="34" cy="29" r="7.500" fill="#8c6a3c" />
          <path d="M19 48c4-10 26-10 30 0-8 9-22 9-30 0z" fill="#8c6a3c" />
        </Tile>
        <Tile bg="bg-linear-to-b from-white to-[#efefec]">
          {["#3a7cee", "#e2463b", "#ee9a35"].map((c, i) => (
            <g key={c}>
              <circle cx="14" cy={17 + i * 17} r="5.200" fill="#fff" stroke={c} strokeWidth="1.200" />
              <circle cx="14" cy={17 + i * 17} r="3.600" fill={c} />
              <path d={`M25 ${17 + i * 17}h35`} stroke="#c2c2c2" strokeWidth="1.800" />
            </g>
          ))}
        </Tile>
        <Tile bg="bg-linear-to-b from-[#f8f7f4] to-[#e3e2de]" dot>
          <path d="M0 0h68v17H0z" fill="#f8cc4a" />
          <path d="M0 18h68" stroke="#b9b5aa" strokeWidth="1.500" />
          <path d="M2 20.500h64" stroke="#999" strokeWidth="1.500" strokeDasharray="1 1.500" />
          <path d="M0 34h68M0 51h68" stroke="#d8d8d6" strokeWidth="2" />
        </Tile>
        <Tile bg="bg-linear-to-b from-[#2c3836] to-[#0c1012]">
          <FaApple x="8" y="20" size={24} color="#fff" />
          <text x="30" y="44" fontSize="28" fontWeight="600" fill="#fff" letterSpacing="-0.500">tv</text>
        </Tile>
        <Tile bg="bg-linear-to-b from-[#ea5f74] to-[#e53b40]">
          <path d="M25 49V19l24-6v31" stroke="#fff" strokeWidth="3" fill="none" />
          <path d="M24 17l26-6v7l-26 6z" fill="#fff" />
          <ellipse cx="19.500" cy="50" rx="6.500" ry="5.500" fill="#fff" />
          <ellipse cx="43.500" cy="45" rx="6.500" ry="5.500" fill="#fff" />
        </Tile>
        <Tile bg="bg-linear-to-b from-[#bc66ea] to-[#6d2bab]">
          <circle cx="34" cy="32" r="23" stroke="#fff" strokeWidth="3" fill="none" strokeDasharray="118 26.500" strokeDashoffset="-49.500" />
          <circle cx="34" cy="32" r="14.500" stroke="#fff" strokeWidth="3" fill="none" strokeDasharray="66 25" strokeDashoffset="-35.500" />
          <circle cx="34" cy="30" r="5.800" fill="#fff" />
          <path d="M28 42c0-5 12-5 12 0l-2 15c-.5 4-7.500 4-8 0z" fill="#fff" />
        </Tile>
        <Tile bg="bg-linear-to-b from-[#5cc3fb] to-[#3064e8]">
          <path d="M17 9h34l3 20H14z" fill="#f4f4f4" />
          <path d="M17 26h34" stroke="#9db1c9" strokeWidth="2" />
          <circle cx="34" cy="18" r="6.500" fill="#56ae59" />
          <path d="M34 18v-6.500a6.500 6.500 0 00-6.500 6.500z" fill="#e2463b" />
          <path d="M34 18h6.500a6.500 6.500 0 00-6.500-6.500z" fill="#3a9ae8" />
          <path d="M34 30v26M23 57h22" stroke="#dfe6ee" strokeWidth="3" />
        </Tile>
        <Tile bg="bg-linear-to-b from-[#96f57a] to-[#5ac83e]">
          <path d="M17 58V44M29 58V32M41 58V10M52 58V23" stroke="#f4fbf2" strokeWidth="8.500" />
        </Tile>
        <Tile bg="bg-linear-to-b from-[#f5b44e] to-[#ee8c37]">
          <path d="M52 13c3-2 5 0 4 3L21 50l-9 7 4-11z" fill="#f5f3ef" />
          <path d="M33 32l6 4" stroke="#b9a88c" strokeWidth="1.500" />
          <path d="M14 57.500h44" stroke="#f9d4a6" strokeWidth="2" />
        </Tile>
        <Tile bg="bg-linear-to-b from-[#52b3f2] to-[#2b5cdc]">
          <path d="M37 14L20 44M30 14l26 40M12 42h44M19 49l-3 5" stroke="#f3f7fd" strokeWidth="5.500" strokeLinecap="round" fill="none" />
        </Tile>
        <Tile bg="bg-linear-to-b from-[#d5dfe6] to-[#8f8f8f]">
          <circle cx="34" cy="34" r="29" fill="#2d2f31" />
          <circle cx="34" cy="34" r="25" fill="none" stroke="#b8bcbf" strokeWidth="3.500" />
          <circle cx="34" cy="34" r="27" fill="none" stroke="#b8bcbf" strokeWidth="2.500" strokeDasharray="1.500 1.500" />
          <circle cx="34" cy="34" r="15" fill="#55585a" stroke="#b8bcbf" strokeWidth="3" />
          <path d="M34 34h24M34 34L22 13M34 34L22 55" stroke="#b8bcbf" strokeWidth="3" />
          <circle cx="34" cy="34" r="4" fill="#b8bcbf" />
        </Tile>
        <div className="relative">
          <Tile bg="bg-[#f7e14b]" dot>
            <path d="M34 12C20 12 8 20 8 32c0 8 5 13 11 16l-1 12 10-9c18 2 32-6 32-19S48 12 34 12z" fill="#3a1d1f" />
            <text x="34.500" y="38" textAnchor="middle" fontSize="16" fontWeight="800" fill="#f7e14b" letterSpacing="-0.600">TALK</text>
          </Tile>
          <div className="absolute top-[-8px] left-[46px] h-[32px] w-[32px] rounded-full bg-[#e5503c] text-center text-[17px] leading-[32px] text-white">40</div>
        </div>
      </div>
      <div className="mt-[-2px] ml-[29px] h-[78px] w-[2px] shrink-0 bg-[#5a5a5a]" />
      <div className="ml-[28px] flex gap-[19.330px]">
        <Tile bg="bg-black" dot>
          <rect x="1.500" y="1.500" width="65" height="65" rx="14" fill="#1d1d1d" stroke="#9fb0ba" strokeWidth="3" />
          <rect x="4" y="4" width="60" height="60" rx="12" fill="#1f1f1f" stroke="#000" strokeWidth="3" />
          <path d="M12 12l6 5-6 5M23 25h10" stroke="#f2f2f2" strokeWidth="2.400" fill="none" />
        </Tile>
        <Tile bg="bg-white" dot>
          <VsCode />
        </Tile>
        <div className="relative">
          <Tile bare dot>
            <path d="M2 8L46 1l20 15v46l-44 5L4 55z" fill="#1b1b1b" stroke="#fff" strokeWidth="2" />
            <path d="M8 9l34-5 12 9-36 4z" fill="#fff" />
            <path d="M18 20l44-4v43l-44 5z" fill="#fff" />
            <text x="40" y="55" textAnchor="middle" fontSize="42" fontWeight="700" fontFamily="Liberation Serif" fill="#111">N</text>
          </Tile>
          <div className="absolute top-[66px] left-[-7px] h-[10px] w-[82px] rounded-[5px] border-2 border-[#555] bg-[#4f8ff5]" />
        </div>
        <Tile bg="bg-[#f0f0f0]" dot>
          <Chrome />
        </Tile>
        <Tile bg="bg-white" dot>
          <g strokeWidth="9.500" strokeLinecap="round">
            <path d="M28 27.500H15M28 15v.01" stroke="#62c1e8" />
            <path d="M40.500 15v12.500M53 27.500h.01" stroke="#58af7e" />
            <path d="M53 40.500H40.500M40.500 53v.01" stroke="#e2b24a" />
            <path d="M28 53V40.500M15 40.500h.01" stroke="#cd3060" />
          </g>
        </Tile>
        <Tile bare dot>
          <path d="M1 6l53-11 17 63-56 12z" fill="#f8f8f8" stroke="#ccc" strokeWidth="0.500" />
          <g transform="translate(11 12) rotate(-10 20 20) scale(1.700)">
            <path fill="#3d74a6" d="M14.250.18l.9.2.73.26.59.3.45.32.34.34.25.34.16.33.1.3.04.26.02.2-.01.13V8.500l-.05.63-.13.550-.21.46-.26.38-.3.31-.33.25-.35.19-.35.14-.33.1-.3.070-.26.040-.21.020H8.770l-.69.050-.59.140-.5.220-.41.270-.33.320-.27.350-.2.360-.15.370-.1.350-.07.320-.04.270-.02.210v3.060H3.170l-.21-.03-.28-.07-.32-.12-.35-.18-.36-.26-.36-.36-.35-.46-.32-.59-.28-.73-.21-.88-.14-1.050-.05-1.230.06-1.220.16-1.040.24-.87.32-.71.36-.57.4-.44.42-.33.42-.24.4-.16.36-.1.32-.05.24-.01h.16l.06.01h8.160v-.83H6.180l-.01-2.750-.02-.37.05-.34.11-.31.17-.28.25-.26.31-.23.38-.2.44-.18.51-.15.58-.12.64-.1.71-.06.77-.04.84-.02 1.270.05z" />
            <path fill="#f3cf48" d="M21.100 6.110l.28.06.32.12.35.18.36.27.36.35.35.47.32.59.28.73.21.88.14 1.040.05 1.230-.06 1.230-.16 1.040-.24.86-.32.71-.36.57-.4.45-.42.33-.42.24-.4.16-.36.09-.32.05-.24.02-.16-.01h-8.220v.82h5.840l.01 2.760.02.36-.05.34-.11.31-.17.29-.25.25-.31.24-.38.2-.44.17-.51.15-.58.13-.64.09-.71.07-.77.04-.84.01-1.270-.04-1.070-.14-.9-.2-.73-.25-.59-.3-.45-.33-.34-.34-.25-.34-.16-.33-.1-.3-.04-.25-.02-.2.01-.13v-5.340l.05-.64.13-.54.21-.46.26-.38.3-.32.33-.24.35-.2.35-.14.33-.1.3-.06.26-.04.21-.02.13-.01h5.840l.69-.05.59-.14.5-.21.41-.28.33-.32.27-.35.2-.36.15-.36.1-.35.07-.32.04-.28.02-.21V6.070h2.090l.14.01z" />
            <circle cx="8.800" cy="3" r="1.100" fill="#fff" />
            <circle cx="15.500" cy="21" r="1.100" fill="#fff" />
          </g>
          <path d="M73 17l4 2-18 45-6 11 1-12z" fill="#23262e" />
          <path d="M60 42l6 3-8 20-5 9 1-11z" fill="#b9bec6" />
        </Tile>
        <Tile bare dot>
          <rect x="-0.500" y="-2" width="71" height="72" fill="#f4f4f4" />
          <Cross x={35} y={34} r={12} c="#4a7ca8" s={4} />
          {[[17, 19], [53, 19], [17, 49], [53, 49]].map(([x, y]) => (
            <Cross key={`${x}-${y}`} x={x} y={y} r={8} c="#4a7ca8" s={3} />
          ))}
          {[[35, 9], [35, 59], [10, 34], [60, 34]].map(([x, y]) => (
            <Cross key={`${x}-${y}`} x={x} y={y} r={6} c="#4a7ca8" s={2.200} />
          ))}
        </Tile>
      </div>
      <div className="mt-[-2px] ml-[29px] h-[78px] w-[2px] shrink-0 bg-[#5a5a5a]" />
      <div className="relative ml-[30px] h-[76px] w-[68px]">
        <svg width="68" height="76" viewBox="0 0 68 76" className="block">
          <path d="M2 3c0-2 1-3 3-3h12l5 4h38c3 0 5 2 5 5v42c0 4-2 5-5 5H6c-3 0-4-2-4-5z" fill="#5ab4e8" />
          <path d="M6 1h34l17 17v53H6z" fill="#fcfcfc" />
          <path d="M40 1c3 6 3 12 3 17h14z" fill="#d4d4d4" />
          <path d="M16 23h31M16 33h18M16 42h31M16 52h23" stroke="#bdbdbd" strokeWidth="4" />
          <g transform="translate(39 49) scale(0.450)">
            <VsCode />
          </g>
        </svg>
        <div className="absolute top-[78px] left-[-11px] h-[8px] w-[84px] rounded-full bg-[#a9a9a9]" />
      </div>
      <svg width="80" height="62" viewBox="0 0 80 62" className="mt-[12px] ml-[12px] block shrink-0">
        <path d="M0 0h78v45H0z" fill="#fbfbfb" />
        <path d="M0 0h78v5H0z" fill="#2f2f33" />
        <path d="M0 9h78v2H0z" fill="#4a78b5" />
        <path d="M0 11h78v10H0z" fill="#e8a862" />
        <circle cx="7" cy="19" r="4" fill="#e5e5e5" />
        <path d="M3 25h16M3 29h6" stroke="#aaa" strokeWidth="1.500" />
        <path d="M66 33h9" stroke="#4a78b5" strokeWidth="2" />
        <path d="M3 41h4" stroke="#e2463b" strokeWidth="3" />
        <path d="M8 41h10" stroke="#7fa9d8" strokeWidth="3" />
        <rect x="51" y="36" width="26" height="24" rx="6" fill="#f5f5f5" />
        <g transform="translate(50.700 34.700) scale(0.390)">
          <Chrome />
        </g>
      </svg>
      <svg width="60" height="78" viewBox="0 0 60 78" className="mt-[-6px] ml-[18px] block shrink-0">
        <path d="M4 14L10 3l10-2 8 3 10-4 10 3 9 12-8 6H12z" fill="#dcdcdc" />
        <path d="M10 8l8 4 4-8M28 4l4 8 8-6M40 12l10-4M14 14l6-3M46 4l4 10" stroke="#444" strokeWidth="2" fill="none" />
        <path d="M22 9l6 4M36 11l5-3" stroke="#d9822b" strokeWidth="2.500" />
        <path d="M27 7l5 3" stroke="#4aa8b0" strokeWidth="2.500" />
        <path d="M1 10c0 4 4 8 29 8s29-4 29-8l-6 61c-1 8-45 8-46 0z" fill="#6b7074" opacity="0.950" />
        <path d="M1 10c0 4 4 8 29 8s29-4 29-8" fill="none" stroke="#b5b9bc" strokeWidth="1.500" />
        <path d="M8 24l4 46M52 24l-4 46" stroke="#8d9296" strokeWidth="2" opacity="0.700" />
        <path d="M16 28l14 16-10 22M42 26L30 44l12 22" stroke="#7d8286" strokeWidth="4" opacity="0.500" fill="none" />
      </svg>
    </div>
  );
}

/* ----------------------------------- App ----------------------------------- */

export default function App() {
  return (
    <div className="relative h-[1912px] w-[2940px] overflow-hidden bg-[#2b2b2b] font-['Inter','Noto_Sans_CJK_KR',sans-serif]">
      <MenuBar />
      <div className="flex h-[1720px] flex-col overflow-hidden rounded-[20px] bg-[#f5f5f5] shadow-[0_0_0_2px_#0a0a0a,0_16px_50px_rgba(0,0,0,0.750)]">
        <div className="relative flex h-[58px] shrink-0 items-center justify-center border-t-2 border-b-2 border-t-white border-b-[#cdcdcd] bg-[#efefef]">
          <div className="absolute left-[16px] flex gap-[16px]">
            <div className="h-[24px] w-[24px] rounded-full border border-[#d95a4e] bg-[#ed6b5f]" />
            <div className="h-[24px] w-[24px] rounded-full border border-[#dba43a] bg-[#f5bf4f]" />
            <div className="h-[24px] w-[24px] rounded-full border border-[#4fae43] bg-[#61c554]" />
          </div>
          <span className="mt-[-3px] text-[25.500px] font-bold tracking-[0.300px] text-[#444]">Tableau Public - 문서2</span>
        </div>
        <Toolbar />
        <div className="flex h-[1484px] bg-[#f4f4f4] pt-[2px]">
          <DataPane />
          <CardColumn />
          <Workspace />
        </div>
        <SheetTabs />
        <StatusBar />
      </div>
      <Dock />
      <ContextMenu items={mainMenu} className="top-[240px] left-[1192px] w-[352px]" />
      <ContextMenu items={subMenu} className="top-[780px] left-[1544px] w-[220px]" />
    </div>
  );
}
